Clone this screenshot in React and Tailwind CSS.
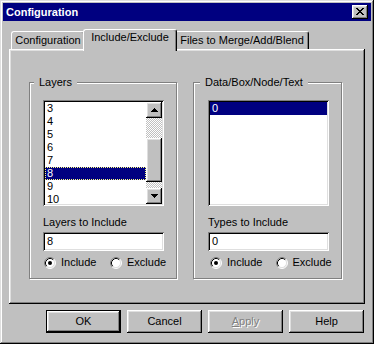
import React from 'react';

const raised = "shadow-[inset_-1px_-1px_#000,inset_1px_1px_#fff,inset_-2px_-2px_#808080,inset_2px_2px_#dfdfdf]";
const sunken = "shadow-[inset_1px_1px_#808080,inset_-1px_-1px_#fff,inset_2px_2px_#000,inset_-2px_-2px_#dfdfdf]";
const dither = "bg-[repeating-conic-gradient(#c0c0c0_0%_25%,#fff_0%_50%)] bg-[length:2px_2px]";

function Arrow({ down }) {
  return (
    <svg width="7" height="4" viewBox="0 0 7 4" shapeRendering="crispEdges" className={down ? 'rotate-180' : ''}>
      <rect x="3" y="0" width="1" height="1" fill="#000" />
      <rect x="2" y="1" width="3" height="1" fill="#000" />
      <rect x="1" y="2" width="5" height="1" fill="#000" />
      <rect x="0" y="3" width="7" height="1" fill="#000" />
    </svg>
  );
}

function CloseGlyph() {
  const rows = [
    [0, 1, 6, 7],
    [1, 2, 5, 6],
    [2, 3, 4, 5],
    [3, 4],
    [2, 3, 4, 5],
    [1, 2, 5, 6],
    [0, 1, 6, 7],
  ];
  return (
    <svg width="8" height="7" viewBox="0 0 8 7" shapeRendering="crispEdges">
      {rows.map((xs, y) => xs.map((x) => <rect key={`${x}-${y}`} x={x} y={y} width="1" height="1" fill="#000" />))}
    </svg>
  );
}

function Radio({ checked, label }) {
  return (
    <div className="flex items-center w-[66px] h-[13px] gap-[5px]">
      <svg width="12" height="12" viewBox="0 0 12 12" className="shrink-0">
        <circle cx="6" cy="6" r="5" fill="#fff" />
        <path d="M2.11 9.89 A5.5 5.5 0 0 1 9.89 2.11" stroke="#808080" fill="none" />
        <path d="M9.89 2.11 A5.5 5.5 0 0 1 2.11 9.89" stroke="#fff" fill="none" />
        <path d="M2.82 9.18 A4.5 4.5 0 0 1 9.18 2.82" stroke="#000" fill="none" />
        <path d="M9.18 2.82 A4.5 4.5 0 0 1 2.82 9.18" stroke="#dfdfdf" fill="none" />
        {checked && <circle cx="6" cy="6" r="2" fill="#000" />}
      </svg>
      <span>{label}</span>
    </div>
  );
}

function Group({ label, labelLeft, className, children }) {
  return (
    <div className={`relative h-[197px] border border-[#808080] shadow-[inset_1px_1px_#fff,1px_1px_#fff] ${className}`}>
      <span className={`absolute -top-[7px] ${labelLeft} bg-[#c0c0c0] px-[5px] leading-[13px]`}>{label}</span>
      {children}
    </div>
  );
}

function ListBox({ items, selected, focused, scrollbar }) {
  return (
    <div className={`w-[121px] h-[106px] bg-white p-[2px] flex ${sunken}`}>
      <div className="flex-1 overflow-hidden">
        {items.map((item) => (
          <div
            key={item}
            className={`h-[13px] leading-[11px] pl-[1px] ${
              item === selected
                ? `bg-[#000080] text-white border ${focused ? 'border-dotted border-[#ffff80]' : 'border-[#000080]'}`
                : 'border border-transparent'
            }`}
          >
            {item}
          </div>
        ))}
      </div>
      {scrollbar && (
        <div className="w-[16px] flex flex-col">
          <div className={`h-[16px] flex items-center justify-center bg-[#c0c0c0] ${raised}`}>
            <Arrow />
          </div>
          <div className={`h-[20px] ${dither}`} />
          <div className={`h-[44px] bg-[#c0c0c0] ${raised}`} />
          <div className={`flex-1 ${dither}`} />
          <div className={`h-[16px] flex items-center justify-center bg-[#c0c0c0] ${raised}`}>
            <Arrow down />
          </div>
        </div>
      )}
    </div>
  );
}

function Button({ children, isDefault }) {
  return (
    <div
      className={`w-[75px] h-[23px] flex items-center justify-center bg-[#c0c0c0] ${
        isDefault
          ? 'border border-black shadow-[inset_-1px_-1px_#000,inset_1px_1px_#fff,inset_-2px_-2px_#808080,inset_2px_2px_#dfdfdf]'
          : raised
      }`}
    >
      {children}
    </div>
  );
}

export default function App() {
  const layers = ['3', '4', '5', '6', '7', '8', '9', '10'];

  return (
    <div className={`w-[374px] h-[344px] bg-[#c0c0c0] p-[3px] text-[11px] leading-[13px] text-black font-['Liberation_Sans',Arial,sans-serif] shadow-[inset_-1px_-1px_#000,inset_1px_1px_#dfdfdf,inset_-2px_-2px_#808080,inset_2px_2px_#fff]`}>
      {/* Title bar */}
      <div className="h-[18px] bg-[#000080] flex items-center justify-between pl-[3px] pr-[3px]">
        <span className="text-white font-bold">Configuration</span>
        <div className={`w-[16px] h-[14px] bg-[#c0c0c0] pl-[4px] pt-[3px] ${raised}`}>
          <CloseGlyph />
        </div>
      </div>

      <div className="px-[6px]">
        {/* Tabs */}
        <div className="mt-[8px] h-[20px] flex items-end pl-[2px]">
          <div className="w-[74px] h-[18px] pt-[2px] text-center border-t border-l border-white border-r border-r-black shadow-[inset_-1px_0_#808080] rounded-t-[3px]">
            Configuration
          </div>
          <div className="relative z-10 w-[94px] h-[22px] -mx-[2px] -mb-[2px] pt-[1px] text-center bg-[#c0c0c0] border-t border-l border-white border-r border-r-black shadow-[inset_-1px_0_#808080] rounded-t-[3px]">
            Include/Exclude
          </div>
          <div className="w-[134px] h-[18px] pt-[2px] text-center border-t border-l border-white border-r border-r-black shadow-[inset_-1px_0_#808080] rounded-t-[3px]">
            Files to Merge/Add/Blend
          </div>
        </div>

        {/* Tab panel */}
        <div className={`h-[255px] bg-[#c0c0c0] flex gap-[16px] pl-[20px] pt-[33px] shadow-[inset_-1px_-1px_#000,inset_1px_1px_#fff,inset_-2px_-2px_#808080,inset_2px_2px_#dfdfdf]`}>
          <Group label="Layers" labelLeft="left-[4px]" className="w-[148px] pl-[13px] pt-[17px]">
            <ListBox items={layers} selected="8" focused scrollbar />
            <div className="mt-[10px]">Layers to Include</div>
            <div className={`mt-[3px] w-[121px] h-[19px] bg-white flex items-center pl-[4px] ${sunken}`}>8</div>
            <div className="mt-[5px] ml-[1px] flex">
              <Radio checked label="Include" />
              <Radio label="Exclude" />
            </div>
          </Group>

          <Group label="Data/Box/Node/Text" labelLeft="left-[6px]" className="w-[149px] pl-[14px] pt-[17px]">
            <ListBox items={['0']} selected="0" />
            <div className="mt-[10px]">Types to Include</div>
            <div className={`mt-[3px] w-[121px] h-[19px] bg-white flex items-center pl-[4px] ${sunken}`}>0</div>
            <div className="mt-[5px] ml-[2px] flex">
              <Radio checked label="Include" />
              <Radio label="Exclude" />
            </div>
          </Group>
        </div>
      </div>

      {/* Buttons */}
      <div className="mt-[6px] flex gap-[6px] pl-[43px]">
        <Button isDefault>OK</Button>
        <Button>Cancel</Button>
        <Button>
          <span className="text-[#808080] [text-shadow:1px_1px_#fff]">
            <span className="underline">A</span>pply
          </span>
        </Button>
        <Button>Help</Button>
      </div>
    </div>
  );
}
